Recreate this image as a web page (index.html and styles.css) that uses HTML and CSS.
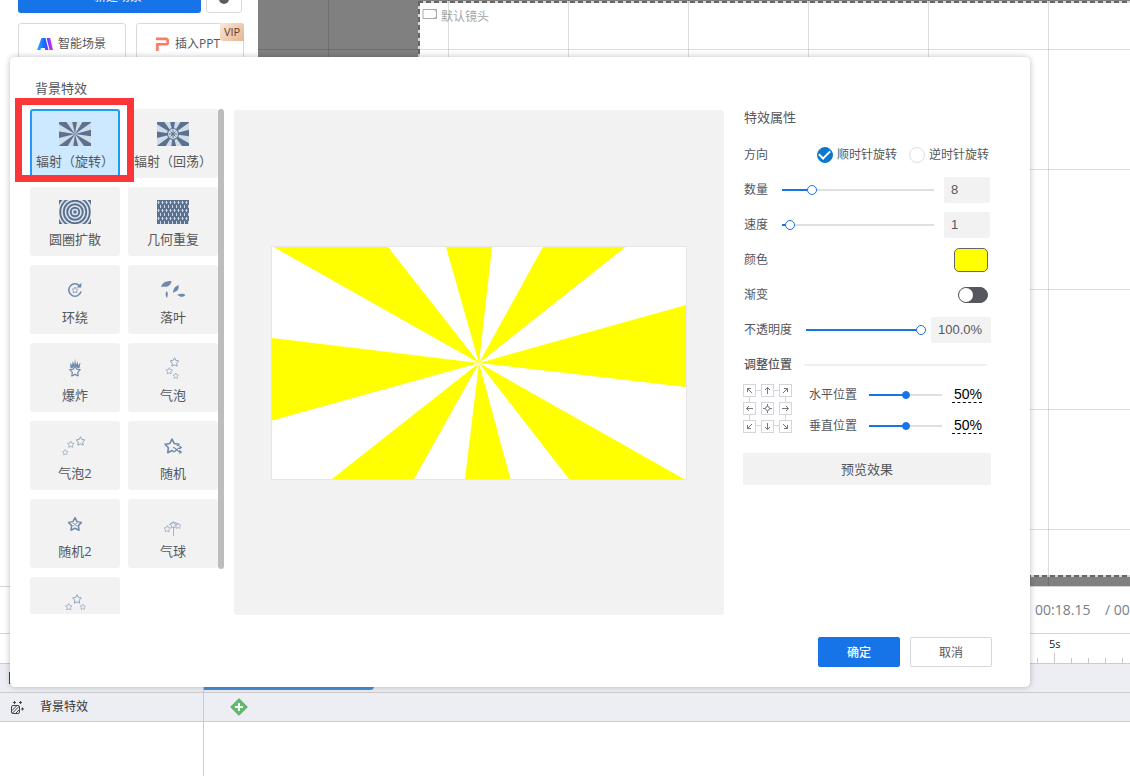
FILE: index.html
```html
<!DOCTYPE html>
<html lang="zh-CN">
<head>
<meta charset="utf-8">
<title>背景特效</title>
<link rel="stylesheet" href="styles.css">
</head>
<body>
<svg class="defs" aria-hidden="true">
  <symbol id="star" viewBox="0 0 12 12"><path d="M6 .9 7.6 4.1 11.2 4.7 8.7 7.3 9.2 11 6 9.4 2.8 11 3.3 7.3.8 4.7 4.4 4.1Z" fill="none" stroke="currentColor" stroke-width="1.200" stroke-linejoin="round"/></symbol>
</svg>

<div class="app">
  <div class="editor">
    <aside class="sidebar">
      <div class="side-row side-row-first">
        <button class="btn-new" type="button"><span>+</span><span>新建场景</span></button>
        <button class="btn-more" type="button" aria-label="更多"><span class="dot"></span></button>
      </div>
      <div class="side-row side-row-tools">
        <button class="tool" type="button">
          <svg width="16" height="13" viewBox="0 0 16 13"><defs><linearGradient id="ai" x1="0" y1="0" x2="1" y2="0"><stop offset="0" stop-color="#20b4ff"/><stop offset=".5" stop-color="#1a62ff"/><stop offset=".7" stop-color="#7a3cff"/><stop offset="1" stop-color="#e02bf0"/></linearGradient></defs><path fill="url(#ai)" fill-rule="evenodd" d="M0 13 4.500 1H8.500l3 12H8.200L7.800 11H4L3.400 13ZM9.600 1h3.600L16 13h-3.400Z"/></svg>
          智能场景
        </button>
        <button class="tool" type="button">
          <svg width="15" height="14" viewBox="0 0 15 14"><path d="M1 1.900h10a1.800 1.800 0 0 1 1.800 1.800v1.800A1.800 1.800 0 0 1 11 7.300H2.400V14" fill="none" stroke="#ff7a5e" stroke-width="2.600"/></svg>
          插入PPT
          <span class="vip">VIP</span>
        </button>
      </div>
    </aside>
    <div class="stage">
      <div class="frame">
        <div class="frame-name">
          <svg width="16" height="12" viewBox="0 0 16 12"><path d="M1 1.500h13.500v9H1zM14.500 3.500 12 1.500M14.500 8.500 12 10.500" fill="none" stroke="#aaa"/></svg>
          默认镜头
        </div>
      </div>
      <div class="stage-grid"></div>
    </div>
  </div>

  <div class="timeline">
    <div class="time-head"><span class="time-now">00:18.15</span><span class="time-total">/ 00</span></div>
    <div class="ruler"><div class="ticks"><span class="ruler-label">5s</span></div></div>
    <div class="track">
      <div class="track-name"><span class="track-box"></span></div>
      <div class="track-lane track-lane-first"><div class="clip"></div></div>
    </div>
    <div class="track">
      <div class="track-name">
        <svg width="15" height="15" viewBox="0 0 15 15" fill="none" stroke="#444"><rect x="1.500" y="5.500" width="8" height="8" rx="1.500"/><path d="M2 10.500 6.500 6M2.500 13 9 6.500M5.500 13.500 9.500 9.500M4.500 1v3M3 2.500h3M10.500 1v3M9 2.500h3M12.500 7.500v3M11 9h3"/></svg>
        背景特效
      </div>
      <div class="track-lane">
        <svg class="keyframe" width="18" height="18" viewBox="0 0 18 18"><path d="M9 .7 17.300 9 9 17.300.7 9Z" fill="#58c065" stroke="#6c9471"/><path d="M9 5v8M5 9h8" stroke="#fff" stroke-width="2"/></svg>
      </div>
    </div>
    <div class="track-empty"></div>
  </div>
</div>

<div class="dialog" role="dialog" aria-label="背景特效">
  <div class="dialog-body">
    <section class="effects">
      <h2 class="effects-title">背景特效</h2>
      <div class="effects-wrap">
        <div class="effects-list">
          <button class="tile tile-active" type="button">
            <svg class="ico" viewBox="0 0 32 24"><path fill="#d0dce8" d="M0 0h32v24H0z"/><circle cx="16" cy="12" r="12" fill="none" stroke="#5b718f" stroke-width="24" stroke-dasharray="4.712 4.712" transform="rotate(-15 16 12)"/></svg>
            <span>辐射（旋转）</span>
          </button>
          <button class="tile" type="button">
            <svg class="ico" viewBox="0 0 32 24"><path fill="#d0dce8" d="M0 0h32v24H0z"/><circle cx="16" cy="12" r="12" fill="none" stroke="#5b718f" stroke-width="24" stroke-dasharray="4.712 4.712" transform="rotate(-15 16 12)"/><circle cx="16" cy="12" r="5.500" fill="#d0dce8" stroke="#5b718f" stroke-width="1.200"/><path d="M16 8v8M12 12h8M13.500 9.500l5 5M18.500 9.500l-5 5" stroke="#5b718f"/></svg>
            <span>辐射（回荡）</span>
          </button>
          <button class="tile" type="button">
            <svg class="ico" viewBox="0 0 32 24"><path fill="#5b718f" d="M0 0h32v24H0z"/><g fill="none" stroke="#dfe6ee" stroke-width="1.600"><circle cx="16" cy="12" r="2.500"/><circle cx="16" cy="12" r="6"/><circle cx="16" cy="12" r="9.500"/><circle cx="16" cy="12" r="13"/><circle cx="16" cy="12" r="16.500"/></g></svg>
            <span>圆圈扩散</span>
          </button>
          <button class="tile" type="button">
            <svg class="ico" viewBox="0 0 32 24"><defs><pattern id="dots" width="4" height="8" patternUnits="userSpaceOnUse"><path d="M1.500 1v3M.5 2.500h2M3.500 5v3" stroke="#cfd9e4"/></pattern></defs><path fill="#5b718f" d="M0 0h32v24H0z"/><path fill="url(#dots)" d="M0 0h32v24H0z"/></svg>
            <span>几何重复</span>
          </button>
          <button class="tile" type="button">
            <svg class="ico" viewBox="0 0 32 24"><path d="M20.500 7.700A6.200 6.200 0 1 0 22 13.500" fill="none" stroke="#6d89ab" stroke-width="1.500"/><path d="M22.300 4.800v4.700h-4.800z" fill="#6d89ab"/><use href="#star" x="12.500" y="8.500" width="7" height="7"/></svg>
            <span>环绕</span>
          </button>
          <button class="tile" type="button">
            <svg class="ico" viewBox="0 0 32 24" fill="#6d89ab"><path d="M4 9.500C5 5 8 3 14.500 3 14 7.500 10.500 9.500 5.500 8.500ZM9.700 13c1.700 2 1.200 4.500.3 7-1.700-2-1.900-5-.3-7ZM16 15.500c0-4 1.500-7 5.500-8.500.8 4-.8 6.500-4.500 7ZM20 17c3-1.500 6.500-2 8.500 0-2.500 2.500-5.500 2-6.500.8Z"/></svg>
            <span>落叶</span>
          </button>
          <button class="tile" type="button">
            <svg class="ico" viewBox="0 0 32 24"><path d="M11.500 12 11 6.500l2 2.800.8-4.300 1.500 3.800L16 2.500l1 6.300L18.800 5l.2 4.300 2.500-2.800L20.500 12h-2L16 9.500 13.500 12Z" fill="#6d89ab"/><use href="#star" x="10" y="9" width="12" height="12"/></svg>
            <span>爆炸</span>
          </button>
          <button class="tile" type="button">
            <svg class="ico ico-soft" viewBox="0 0 32 24"><use href="#star" x="12.500" y="1" width="10" height="10"/><use href="#star" x="8.500" y="11" width="7.500" height="7.500"/><use href="#star" x="15.500" y="16.500" width="6.500" height="6.500"/></svg>
            <span>气泡</span>
          </button>
          <button class="tile" type="button">
            <svg class="ico ico-soft" viewBox="0 0 32 24"><use href="#star" x="16.500" y="2" width="10" height="10"/><use href="#star" x="8" y="6.500" width="7.500" height="7.500"/><use href="#star" x="3" y="15" width="6.500" height="6.500"/></svg>
            <span>气泡2</span>
          </button>
          <button class="tile" type="button">
            <svg class="ico" viewBox="0 0 32 24"><use href="#star" x="7" y="4" width="16" height="16"/><path d="M16.500 12h7.500v8h-7.500z" fill="#f2f2f2"/><path d="M16 13.500c4 0 3 4.500 8 4.500M16 18c4 0 3-4.500 8-4.500M22.300 12l2 1.500-2 1.500M22.300 16.500l2 1.500-2 1.500" fill="none" stroke="#6d89ab" stroke-width="1.200"/></svg>
            <span>随机</span>
          </button>
          <button class="tile" type="button">
            <svg class="ico" viewBox="0 0 32 24"><use href="#star" x="8.500" y="4.500" width="15" height="15"/><path d="M13.500 11c2.500 0 2 3 5 3M13.500 14c2.500 0 2-3 5-3" fill="none" stroke="#6d89ab" stroke-width=".8"/></svg>
            <span>随机2</span>
          </button>
          <button class="tile" type="button">
            <svg class="ico ico-soft" viewBox="0 0 32 24"><path d="M16.500 15v9M12 13.500c1-3.500 7.500-4 9-1" fill="none" stroke="currentColor" stroke-width=".8"/><use href="#star" x="6.500" y="13" width="7.500" height="7.500"/><use href="#star" x="12.500" y="9" width="7.500" height="7.500"/><use href="#star" x="18" y="10.500" width="6.500" height="6.500"/></svg>
            <span>气球</span>
          </button>
          <button class="tile" type="button" aria-label="气球2">
            <svg class="ico ico-soft" viewBox="0 0 32 24"><use href="#star" x="13" y="4" width="10" height="10"/><use href="#star" x="6" y="13" width="7.500" height="7.500"/><use href="#star" x="20.500" y="13.500" width="6.500" height="6.500"/></svg>
          </button>
        </div>
        <div class="scrollbar"></div>
        <div class="highlight"></div>
      </div>
    </section>

    <section class="preview">
      <svg class="preview-art" viewBox="0 0 414 232"><path fill="#fff" d="M0 0h414v232H0z"/><path fill="#ff0" d="M207 116 1.500 0H116ZM207 116 174 0h46ZM207 116 271 0h82.500ZM207 116 414 58v82ZM207 116 412 232H297ZM207 116 238.500 232H193ZM207 116 142 232H60ZM207 116 0 173.500V91Z"/></svg>
    </section>

    <section class="props">
      <h3 class="props-title">特效属性</h3>
      <div class="row">
        <span class="label">方向</span>
        <span class="radios">
          <label class="radio"><input type="radio" name="dir" checked>顺时针旋转</label>
          <label class="radio"><input type="radio" name="dir">逆时针旋转</label>
        </span>
      </div>
      <div class="row">
        <label class="label" for="count">数量</label>
        <input class="range" id="count" type="range" min="1" max="40" value="8" style="--fill:20%">
        <input class="num" type="text" value="8" aria-label="数量">
      </div>
      <div class="row">
        <label class="label" for="speed">速度</label>
        <input class="range" id="speed" type="range" min="0" max="50" value="1" style="--fill:5%">
        <input class="num" type="text" value="1" aria-label="速度">
      </div>
      <div class="row row-split">
        <span class="label">颜色</span>
        <button class="swatch" type="button" aria-label="颜色"></button>
      </div>
      <div class="row row-split">
        <label class="label" for="grad">渐变</label>
        <input class="switch" id="grad" type="checkbox">
      </div>
      <div class="row">
        <label class="label" for="opacity">不透明度</label>
        <input class="range range-tight" id="opacity" type="range" min="0" max="100" value="100" style="--fill:96%">
        <input class="num num-wide" type="text" value="100.0%" aria-label="不透明度">
      </div>
      <div class="row">
        <span class="label label-strong">调整位置</span>
        <span class="divider"></span>
      </div>
      <div class="position">
        <div class="pad">
          <button type="button" aria-label="左上"><svg viewBox="0 0 11 11"><path d="M8 8 3.500 3.500M3.500 7V3.500H7"/></svg></button>
          <button type="button" aria-label="上"><svg viewBox="0 0 11 11"><path d="M5.500 9V2.500M3 5l2.500-2.500L8 5"/></svg></button>
          <button type="button" aria-label="右上"><svg viewBox="0 0 11 11"><path d="M3 8 7.500 3.500M4 3.500h3.500V7"/></svg></button>
          <button type="button" aria-label="左"><svg viewBox="0 0 11 11"><path d="M9 5.500H2.500M5 3 2.500 5.500 5 8"/></svg></button>
          <button type="button" aria-label="居中"><svg viewBox="0 0 11 11"><circle cx="5.500" cy="5.500" r="2"/><path d="M5.500 1v2M5.500 8v2M1 5.500h2M8 5.500h2"/></svg></button>
          <button type="button" aria-label="右"><svg viewBox="0 0 11 11"><path d="M2 5.500h6.500M6 3l2.500 2.500L6 8"/></svg></button>
          <button type="button" aria-label="左下"><svg viewBox="0 0 11 11"><path d="M8 3 3.500 7.500M3.500 4v3.500H7"/></svg></button>
          <button type="button" aria-label="下"><svg viewBox="0 0 11 11"><path d="M5.500 2v6.500M3 6l2.500 2.500L8 6"/></svg></button>
          <button type="button" aria-label="右下"><svg viewBox="0 0 11 11"><path d="M3 3l4.500 4.500M4 7.500h3.500V4"/></svg></button>
        </div>
        <div class="axes">
          <div class="axis">
            <label for="posx">水平位置</label>
            <input class="range range-solid" id="posx" type="range" value="50" style="--fill:50%">
            <span class="pct">50%</span>
          </div>
          <div class="axis">
            <label for="posy">垂直位置</label>
            <input class="range range-solid" id="posy" type="range" value="50" style="--fill:50%">
            <span class="pct">50%</span>
          </div>
        </div>
      </div>
      <button class="btn-preview" type="button">预览效果</button>
    </section>
  </div>
  <div class="dialog-foot">
    <button class="btn btn-ok" type="button">确定</button>
    <button class="btn" type="button">取消</button>
  </div>
</div>
</body>
</html>
```

FILE: styles.css
```css
* { box-sizing: border-box; }

body {
  margin: 0;
  background: #fff;
  color: #55575c;
  font: 12px/20px "Open Sans", "Noto Sans CJK SC", sans-serif;
}

button, input { font: inherit; color: inherit; margin: 0; padding: 0; }
svg { flex: none; }
.defs { position: absolute; width: 0; height: 0; }

.app { display: flex; flex-direction: column; height: 100vh; overflow: hidden; }

/* editor */
.editor { display: flex; flex: 1; min-height: 0; overflow: hidden; }
.sidebar { flex: none; width: 258px; padding: 0 14px 0 18px; }
.side-row { display: flex; }
.side-row-first { gap: 5px; margin-top: -23px; }
.side-row-tools { gap: 10px; margin-top: 10px; }
.btn-new { display: flex; flex: 1; align-items: center; justify-content: center; gap: 6px; height: 36px; padding: 4px 0 0 4px; border: 0; border-radius: 3px; background: #1673e8; color: #fff; }
.btn-more { width: 36px; height: 36px; margin-right: 2px; border: 1px solid #d9dade; border-radius: 3px; background: #fff; }
.dot { display: inline-block; width: 10px; height: 10px; margin-top: 14px; border-radius: 50%; background: #5b5d63; }
.tool {
  position: relative;
  display: flex;
  flex: 1;
  align-items: center;
  gap: 5px;
  height: 41px;
  padding: 0 17px 0 18px;
  border: 1px solid #d9dade;
  border-radius: 3px;
  background: #fff;
  white-space: nowrap;
}
.vip {
  position: absolute;
  top: -1px;
  right: -1px;
  width: 24px;
  border-radius: 0 3px 0 3px;
  background: linear-gradient(135deg, #fbe8da, #e5b48e);
  color: #6b3a1c;
  font-size: 11px;
  line-height: 18px;
  text-align: center;
}

.stage { position: relative; flex: 1; display: flex; min-width: 0; padding: 1px 0 9px 160px; background: #808080; }
.frame {
  flex: 1;
  padding: 3px 2px;
  background:
    repeating-linear-gradient(90deg, #666 0 5px, #d8d8d8 5px 8px) 0 0 / 100% 2px no-repeat,
    repeating-linear-gradient(90deg, #666 0 5px, #d8d8d8 5px 8px) 0 100% / 100% 2px no-repeat,
    repeating-linear-gradient(#666 0 5px, #d8d8d8 5px 8px) 0 0 / 2px 100% no-repeat,
    #fff;
}
.frame-name { display: flex; align-items: flex-start; gap: 3px; padding-left: 2px; color: #a6a6a6; line-height: 26px; }
.frame-name svg { margin-top: 4px; }
.stage-grid {
  position: absolute;
  inset: 0;
  background:
    linear-gradient(90deg, rgba(0, 0, 0, .13) 1px, transparent 1px) 70px 0 / 120px 120px,
    linear-gradient(rgba(0, 0, 0, .13) 1px, transparent 1px) 0 49px / 120px 120px;
}

/* timeline */
.timeline { flex: none; }
.time-head {
  display: flex;
  justify-content: flex-end;
  height: 47px;
  border-top: 1px solid #d4d4d8;
  color: #7a7c88;
  font-size: 14px;
  line-height: 46px;
  white-space: nowrap;
}
.time-now { width: 70px; }
.time-total { width: 25px; }
.ruler { display: flex; justify-content: flex-end; height: 30px; border-top: 1px solid #d4d4d8; }
.ticks {
  width: 93px;
  padding-left: 12px;
  background:
    linear-gradient(#c8c8cc, #c8c8cc) 17px 100% / 1px 10px no-repeat,
    linear-gradient(90deg, #c8c8cc 1px, transparent 1px) 0 100% / 17px 5px repeat-x;
}
.ruler-label { color: #222; font-size: 11px; line-height: 18px; }
.track { display: flex; height: 29px; border-top: 1px solid #cccccf; background: #edeef3; }
.track-name { display: flex; align-items: center; gap: 15px; width: 203px; padding-left: 10px; color: #333; line-height: 28px; }
.track-box { width: 14px; height: 12px; margin-left: -1px; border: 1px solid #444; }
.track-lane { display: flex; flex: 1; align-items: center; padding-left: 26px; border-left: 1px solid #cccccf; }
.track-lane-first { align-items: flex-end; padding: 0 0 2px; }
.clip { width: 170px; height: 24px; border-radius: 0 0 4px; background: #4a90dc; }
.track-empty { height: 55px; border-top: 1px solid #cccccf; background: linear-gradient(#cccccf, #cccccf) 203px 0 / 1px 100% no-repeat; }

/* dialog */
.dialog {
  position: absolute;
  inset: 57px 100px 89px 10px;
  display: flex;
  flex-direction: column;
  padding: 21px 38px 20px 20px;
  border-radius: 5px;
  background: #fff;
  box-shadow: 0 0 6px rgba(0, 0, 0, .25);
}
.dialog-body { display: flex; flex: 1; min-height: 0; }
.dialog-foot { display: flex; flex: none; justify-content: flex-end; gap: 10px; margin-top: 22px; }
.btn { width: 82px; height: 30px; padding-top: 1px; border: 1px solid #d6d7dc; border-radius: 2px; background: #fff; }
.btn-ok { border-color: #1673e8; background: #1673e8; color: #fff; font-weight: 500; }

.effects { display: flex; flex-direction: column; flex: none; width: 194px; }
.effects-title { margin: 0 0 11px 5px; font-size: 13px; font-weight: 400; }
.effects-wrap { position: relative; display: flex; flex: 1; min-height: 0; padding-bottom: 1px; }
.effects-list {
  display: grid;
  grid-template-columns: 90px 90px;
  grid-auto-rows: 69px;
  align-content: start;
  gap: 9px 8px;
  overflow: hidden;
}
.tile {
  display: flex;
  flex-direction: column;
  align-items: center;
  gap: 5px;
  padding: 13px 0 0;
  border: 0;
  border-radius: 3px;
  background: #f2f2f2;
  font-size: 13px;
  white-space: nowrap;
}
.tile-active { background: #cde9ff; box-shadow: inset 0 0 0 2px #1e9bf5; }
.ico { width: 32px; height: 24px; color: #6d89ab; }
.ico-soft { color: #8fa4be; }
.scrollbar { flex: none; width: 6px; height: 91%; border-radius: 3px; background: #bdbdbd; }
.highlight { position: absolute; left: -15px; top: -11px; width: 119px; height: 84px; border: 7px solid #fb3638; pointer-events: none; }

.preview {
  display: flex;
  flex: 1;
  align-items: center;
  justify-content: center;
  min-width: 0;
  margin: 32px 19px 0 10px;
  padding: 0 37px;
  border-radius: 3px;
  background: #f2f2f2;
}
.preview-art { flex: 1; min-width: 0; border: 1px solid #e6e6e8; }

.props { flex: none; width: 249px; padding-top: 29px; }
.props-title { margin: 0 0 10px; padding-left: 1px; font-size: 13px; font-weight: 400; }
.row { display: flex; align-items: center; height: 35px; padding-left: 1px; }
.row-split { justify-content: space-between; padding-right: 4px; }
.label { flex: none; }
.label-strong { font-weight: 500; }
.radios { display: flex; gap: 12px; margin-left: auto; padding-right: 3px; }
.radio { display: flex; align-items: center; gap: 4px; }
.radio input { appearance: none; width: 16px; height: 16px; border: 1px solid #dcdde2; border-radius: 50%; background: #fff; }
.radio input:checked { display: grid; place-content: center; border-color: #0b78d0; background: #0b78d0; }
.radio input:checked::before { content: ""; width: 9px; height: 5px; margin-bottom: 2px; border: solid #fff; border-width: 0 0 2px 2px; transform: rotate(-45deg); }

.range {
  appearance: none;
  flex: 1;
  min-width: 0;
  height: 12px;
  margin: 0 10px 0 14px;
  background: linear-gradient(90deg, #1673e8 var(--fill), #e0e0e0 var(--fill)) center / 100% 2px no-repeat;
}
.range::-webkit-slider-thumb { appearance: none; width: 10px; height: 10px; border: 1px solid #1673e8; border-radius: 50%; background: #fff; }
.range-tight { margin-right: 5px; }
.range-solid { flex: none; width: 73px; margin: 0 10px 0 12px; }
.range-solid::-webkit-slider-thumb { width: 8px; height: 8px; background: #1673e8; }
.num { width: 46px; height: 26px; margin-right: 2px; padding: 0 7px; border: 0; border-radius: 2px; background: #f2f2f2; font: 13px/26px "Liberation Sans", sans-serif; }
.num-wide { width: 60px; margin-right: 1px; }
.swatch { width: 34px; height: 24px; border: 1px solid #666; border-radius: 5px; background: #ff0; }
.switch { appearance: none; width: 30px; height: 16px; border: 1px solid #55575c; border-radius: 8px; background: #55575c; }
.switch::before { content: ""; display: block; width: 14px; height: 14px; border-radius: 50%; background: #fff; }
.divider { flex: 1; height: 2px; margin: 0 5px 0 12px; background: #f0f0f0; }

.position { display: flex; gap: 17px; }
.pad { position: relative; display: grid; grid-template-columns: repeat(3, 13px); grid-auto-rows: 13px; gap: 5px; align-content: start; padding-top: 2px; }
.pad::before { content: ""; position: absolute; inset: 8px 6px 12px; border: 1px solid #d3d6dc; }
.pad button { position: relative; display: flex; border: 1px solid #d3d6dc; background: #fff; }
.pad svg { width: 11px; height: 11px; fill: none; stroke: #777; stroke-width: 1; }
.axes { display: grid; gap: 6px; }
.axis { display: flex; align-items: center; height: 25px; }
.pct { border-bottom: 1px dashed #000; padding-left: 2px; color: #000; font: 14px/16px "Liberation Sans", sans-serif; }
.btn-preview { width: 248px; height: 32px; margin-top: 15px; border: 0; border-radius: 2px; background: #f2f2f2; font-size: 13px; }
```
